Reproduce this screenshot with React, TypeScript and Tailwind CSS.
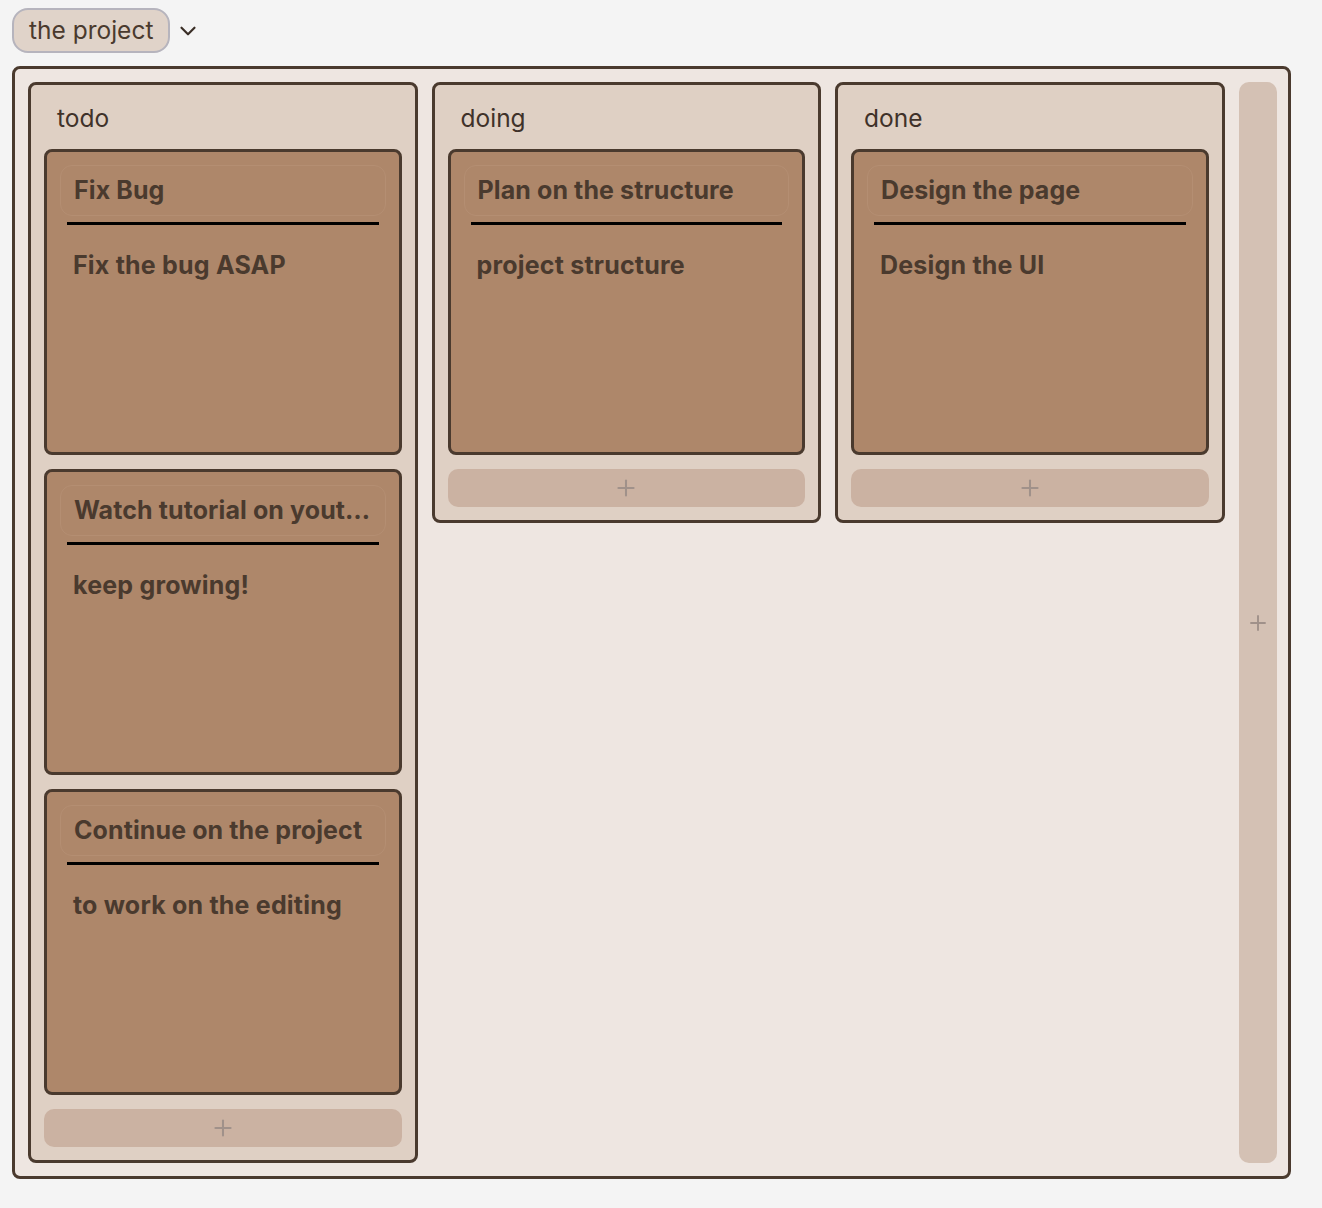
import { ChevronDown, Plus } from "lucide-react";

type TTask = { id: string; title: string; content: string };
type TColumn = { id: string; title: string; tasks: TTask[] };

const columns: TColumn[] = [
  {
    id: "todo",
    title: "todo",
    tasks: [
      { id: "1", title: "Fix Bug", content: "Fix the bug ASAP" },
      { id: "2", title: "Watch tutorial on youtube", content: "keep growing!" },
      { id: "3", title: "Continue on the project", content: "to work on the editing" },
    ],
  },
  {
    id: "doing",
    title: "doing",
    tasks: [{ id: "4", title: "Plan on the structure", content: "project structure" }],
  },
  {
    id: "done",
    title: "done",
    tasks: [{ id: "5", title: "Design the page", content: "Design the UI" }],
  },
];

const TaskCard = ({ task }: { task: TTask }) => {
  return (
    <div className="h-[306px] rounded-lg border-[3px] border-[#4a3a2e] bg-[#ae876a] p-[13px] flex flex-col text-[#4a3a2e]">
      <div className="h-[51px] shrink-0 rounded-xl border border-[#b48e72] pl-[13px] pr-[10px] flex items-center">
        <p className="truncate text-[25px] font-bold tracking-[0.1px]">{task.title}</p>
      </div>
      <div className="mx-[7px] mt-[6px] h-[3px] bg-black" />
      <p className="mt-[22px] px-[13px] text-[25px] font-bold leading-[36px] tracking-[0.2px]">
        {task.content}
      </p>
    </div>
  );
};

const App = () => {
  return (
    <div
      className="min-h-screen bg-[#f4f4f4] pl-3 pt-2 pb-7"
      style={{ fontFamily: "Inter, 'Noto Sans', sans-serif" }}
    >
      <div className="flex items-center gap-[5px]">
        <div className="h-[45px] rounded-[16px] border-2 border-[#b6b4bd] bg-[#e0d3c9] px-[15px] flex items-center text-[24.5px] text-[#4a3a2e]">
          the project
        </div>
        <ChevronDown size={26} strokeWidth={2} className="text-[#3a2e26]" />
      </div>

      <div className="mt-[13px] w-[1279px] rounded-lg border-[3px] border-[#4a3a2e] bg-[#eee6e1] pl-[13px] pr-[11px] py-[13px] flex gap-[14px] items-start">
        {columns.map((col) => (
          <div
            key={col.id}
            className="w-[389.5px] shrink-0 rounded-lg border-[3px] border-[#4a3a2e] bg-[#dfd0c4] p-[13px] flex flex-col"
          >
            <div className="h-[51px] px-[13px] pb-[10px] flex items-center text-[24.5px] text-[#3f322a]">
              {col.title}
            </div>
            <div className="flex flex-col gap-[14px]">
              {col.tasks.map((task) => (
                <TaskCard key={task.id} task={task} />
              ))}
              <button className="h-[38px] rounded-[10px] bg-[#cbb2a2] flex items-center justify-center">
                <Plus size={26} strokeWidth={1.9} className="text-[#a0918a]" />
              </button>
            </div>
          </div>
        ))}
        <button className="w-[38px] shrink-0 self-stretch rounded-[10px] bg-[#d4c1b4] flex items-center justify-center">
          <Plus size={24} strokeWidth={1.9} className="text-[#a0918a]" />
        </button>
      </div>
    </div>
  );
};

export default App;
